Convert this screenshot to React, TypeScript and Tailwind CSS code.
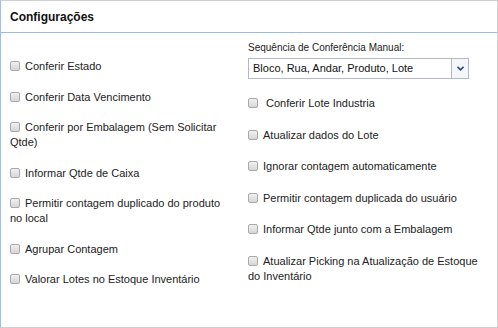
import React from "react";

const font = { fontFamily: '"Liberation Sans", Arial, sans-serif' };

function Check({ label, wide }: { label: string; wide?: boolean }) {
  return (
    <div className="text-[11px] leading-[15px] text-[#222]">
      <span
        className={`inline-block w-[10px] h-[10px] align-[-1px] rounded-[2px] border border-[#a9a9a9] bg-gradient-to-b from-[#f0f0f0] to-[#d6d6d6] ${
          wide ? "mr-[8px]" : "mr-[5px]"
        }`}
      />
      {label}
    </div>
  );
}

const left = [
  "Conferir Estado",
  "Conferir Data Vencimento",
  "Conferir por Embalagem (Sem Solicitar Qtde)",
  "Informar Qtde de Caixa",
  "Permitir contagem duplicado do produto no local",
  "Agrupar Contagem",
  "Valorar Lotes no Estoque Inventário",
];

const right = [
  "Atualizar dados do Lote",
  "Ignorar contagem automaticamente",
  "Permitir contagem duplicada do usuário",
  "Informar Qtde junto com a Embalagem",
  "Atualizar Picking na Atualização de Estoque do Inventário",
];

export default function App() {
  return (
    <div className="w-[498px] h-[328px] bg-white" style={font}>
      <div className="h-full flex flex-col border border-[#d0d0d0] border-l-[#9ec0e8]">
        {/* cabeçalho */}
        <div className="h-[32px] flex items-center px-[9px] border-b border-[#99bbe8]">
          <span className="text-[12px] font-bold text-[#111]">Configurações</span>
        </div>

        {/* corpo */}
        <div className="flex px-[9px]">
          <div className="w-[218px] pt-[26px] flex flex-col gap-[15.5px]">
            {left.map((l) => (
              <Check key={l} label={l} />
            ))}
          </div>
          <div className="w-[234px] ml-[20px] pt-[9px] flex flex-col">
            <div className="text-[10px] leading-[12px] text-[#222]">
              Sequência de Conferência Manual:
            </div>
            <div className="mt-[4px] w-[221px] h-[21px] flex border border-[#b5b8c8] bg-white">
              <div className="flex-1 flex items-center pl-[4px] text-[11px] text-[#111]">
                Bloco, Rua, Andar, Produto, Lote
              </div>
              <div className="w-[17px] flex items-center justify-center border-l border-[#b5b8c8] bg-[#f4f6f9]">
                <svg width="7" height="5" viewBox="0 0 7 5">
                  <path d="M0.5 0.8 L3.5 3.8 L6.5 0.8" fill="none" stroke="#2c4a78" strokeWidth="1.6" />
                </svg>
              </div>
            </div>
            <div className="mt-[17px] flex flex-col gap-[16.5px]">
              <Check label="Conferir Lote Industria" wide />
              {right.map((l) => (
                <Check key={l} label={l} />
              ))}
            </div>
          </div>
        </div>
      </div>
    </div>
  );
}
